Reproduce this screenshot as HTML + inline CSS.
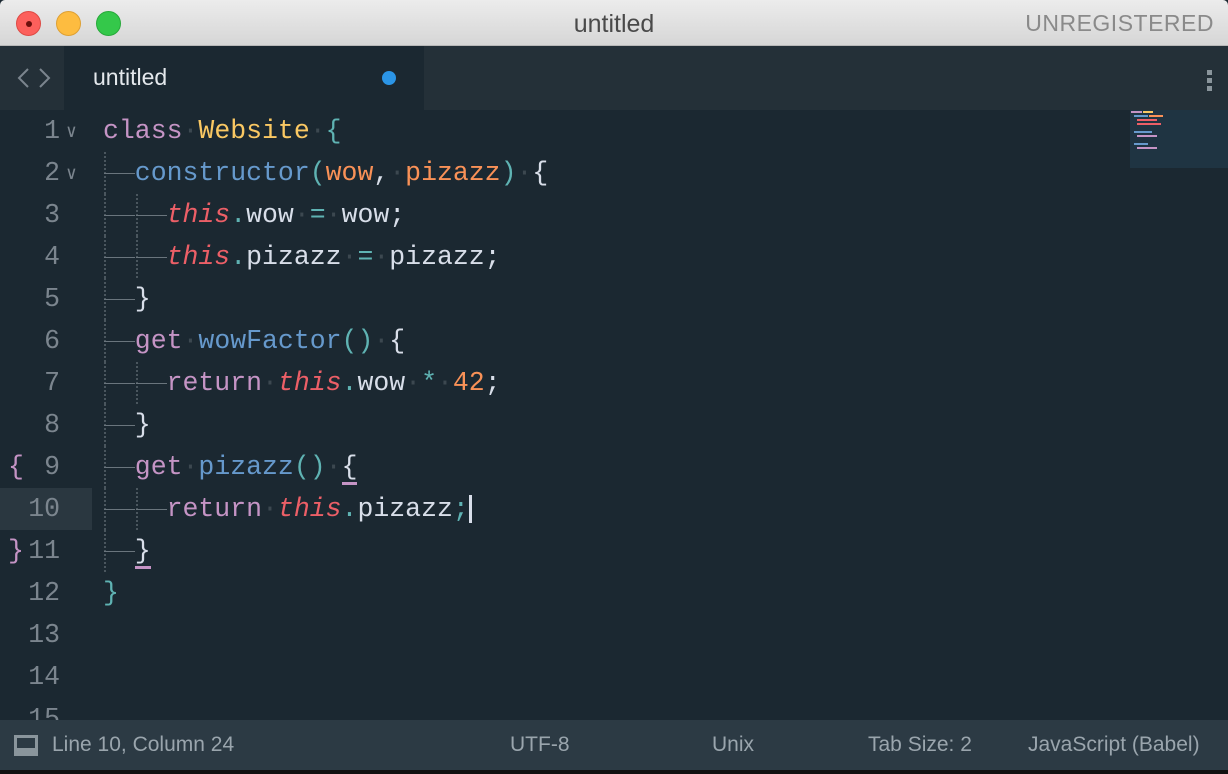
<!DOCTYPE html>
<html><head><meta charset="utf-8"><style>
*{margin:0;padding:0;box-sizing:border-box}
body{width:1228px;height:774px;overflow:hidden;background:#1b2831;font-family:"Liberation Sans",sans-serif;position:relative}
.title{position:absolute;left:0;top:0;width:1228px;height:46px;background:linear-gradient(#ececec,#d6d6d6);border-bottom:1px solid #b8b8b8;border-radius:5px 5px 0 0}
.dot{position:absolute;top:11px;width:25px;height:25px;border-radius:50%}
.title .t{position:absolute;left:0;width:1228px;text-align:center;top:10px;font-size:25px;color:#4a4a4a}
.title .u{position:absolute;right:14px;top:10px;font-size:23px;color:#8a8a8a;letter-spacing:.5px}
.tabbar{position:absolute;left:0;top:46px;width:1228px;height:64px;background:#243038}
.tab{position:absolute;left:64px;top:0;width:360px;height:64px;background:#1b2831}
.tab span{position:absolute;left:29px;top:18px;font-size:23px;color:#e4e8ec}
.tab i{position:absolute;left:318px;top:25px;width:14px;height:14px;border-radius:50%;background:#2b95e6}
.ed{position:absolute;left:0;top:110px;width:1228px;height:610px;background:#1b2831;overflow:hidden}
.ln{position:absolute;left:0;width:1228px;height:42px;line-height:42px;font-family:"Liberation Mono",monospace;font-size:26.5px;white-space:pre}
.num{position:absolute;left:0;width:60px;color:#7b858e;text-align:right}
.code{position:absolute;left:103px;color:#d8dee9}
.g{display:inline-block;width:31.8px;height:42px;vertical-align:top;position:relative}
.g:before{content:"";position:absolute;left:1px;top:0;height:42px;border-left:2px dotted #4a565e}
.g:after{content:"";position:absolute;left:1px;right:0;top:21px;height:1px;background:#6a757d}
.k{color:#c594c5}.c{color:#fac863}.b{color:#5fb3b3}.f{color:#6699cc}.p{color:#f99157}.th{color:#ec5f67;font-style:italic}.w{color:#d8dee9}
.sp{color:#3c4850}
.fold{position:absolute;left:66px;top:2px;color:#7b858e;font-size:18px}
.status{position:absolute;left:0;top:720px;width:1228px;height:50px;background:#2c3a44;color:#9aa5ad;font-size:21px}
.status span{position:absolute;top:13px}
.bottom{position:absolute;left:0;top:770px;width:1228px;height:4px;background:#111}
.mm{position:absolute;height:2px}
</style></head><body>
<div class="title">
<div class="dot" style="left:16px;background:#fc605c;border:1px solid #de4a44"><div style="position:absolute;left:9px;top:9px;width:6px;height:6px;border-radius:50%;background:#6b0f0c"></div></div>
<div class="dot" style="left:56px;background:#fdbc40;border:1px solid #dea033"></div>
<div class="dot" style="left:96px;background:#34c84a;border:1px solid #27a93a"></div>
<div class="t">untitled</div><div class="u">UNREGISTERED</div>
</div>
<div class="tabbar">
<svg style="position:absolute;left:8px;top:20px" width="50" height="24"><path d="M20 3 L11 12 L20 21" stroke="#7b858e" stroke-width="2" fill="none"/><path d="M42 3 L51 12 L42 21" stroke="#7b858e" stroke-width="2" fill="none" transform="translate(-10 0)"/></svg>
<div class="tab"><span>untitled</span><i></i></div>
<div style="position:absolute;left:1207px;top:24px;width:5px;height:5px;background:#8a959c;box-shadow:0 8px 0 #8a959c,0 16px 0 #8a959c"></div>
</div>
<div class="ed">
<div style="position:absolute;left:0;top:378px;width:92px;height:42px;background:#2a3740"></div>
<div style="position:absolute;left:1130px;top:0;width:98px;height:58px;background:#1f3442"></div>
<div class="mm" style="left:1131px;top:1px;width:11px;background:#c594c5"></div><div class="mm" style="left:1143px;top:1px;width:10px;background:#fac863"></div>
<div class="mm" style="left:1134px;top:5px;width:14px;background:#6699cc"></div><div class="mm" style="left:1149px;top:5px;width:14px;background:#f99157"></div>
<div class="mm" style="left:1137px;top:9px;width:20px;background:#ec5f67"></div>
<div class="mm" style="left:1137px;top:13px;width:24px;background:#ec5f67"></div>
<div class="mm" style="left:1134px;top:21px;width:18px;background:#6699cc"></div>
<div class="mm" style="left:1137px;top:25px;width:20px;background:#c594c5"></div>
<div class="mm" style="left:1134px;top:33px;width:14px;background:#6699cc"></div>
<div class="mm" style="left:1137px;top:37px;width:20px;background:#c594c5"></div>

<div class="ln" style="top:0"><span class="num">1</span><span class="fold">∨</span><span class="code"><span class="k">class</span><span class="sp">·</span><span class="c">Website</span><span class="sp">·</span><span class="b">{</span></span></div>
<div class="ln" style="top:42px"><span class="num">2</span><span class="fold">∨</span><span class="code"><span class="g"></span><span class="f">constructor</span><span class="b">(</span><span class="p">wow</span>,<span class="sp">·</span><span class="p">pizazz</span><span class="b">)</span><span class="sp">·</span>{</span></div>
<div class="ln" style="top:84px"><span class="num">3</span><span class="code"><span class="g"></span><span class="g"></span><span class="th">this</span><span class="b">.</span>wow<span class="sp">·</span><span class="b">=</span><span class="sp">·</span>wow;</span></div>
<div class="ln" style="top:126px"><span class="num">4</span><span class="code"><span class="g"></span><span class="g"></span><span class="th">this</span><span class="b">.</span>pizazz<span class="sp">·</span><span class="b">=</span><span class="sp">·</span>pizazz;</span></div>
<div class="ln" style="top:168px"><span class="num">5</span><span class="code"><span class="g"></span>}</span></div>
<div class="ln" style="top:210px"><span class="num">6</span><span class="code"><span class="g"></span><span class="k">get</span><span class="sp">·</span><span class="f">wowFactor</span><span class="b">()</span><span class="sp">·</span>{</span></div>
<div class="ln" style="top:252px"><span class="num">7</span><span class="code"><span class="g"></span><span class="g"></span><span class="k">return</span><span class="sp">·</span><span class="th">this</span><span class="b">.</span>wow<span class="sp">·</span><span class="b">*</span><span class="sp">·</span><span class="p">42</span>;</span></div>
<div class="ln" style="top:294px"><span class="num">8</span><span class="code"><span class="g"></span>}</span></div>
<div class="ln" style="top:336px"><span style="position:absolute;left:8px;color:#c594c5">{</span><span class="num">9</span><span class="code"><span class="g"></span><span class="k">get</span><span class="sp">·</span><span class="f">pizazz</span><span class="b">()</span><span class="sp">·</span><span style="border-bottom:3px solid #c594c5">{</span></span></div>
<div class="ln" style="top:378px"><span class="num">10</span><span class="code"><span class="g"></span><span class="g"></span><span class="k">return</span><span class="sp">·</span><span class="th">this</span><span class="b">.</span>pizazz<span class="b">;</span><span style="display:inline-block;width:3px;height:28px;background:#d8dee9;vertical-align:middle"></span></span></div>
<div class="ln" style="top:420px"><span style="position:absolute;left:8px;color:#c594c5">}</span><span class="num">11</span><span class="code"><span class="g"></span><span style="border-bottom:3px solid #c594c5">}</span></span></div>
<div class="ln" style="top:462px"><span class="num">12</span><span class="code"><span class="b">}</span></span></div>
<div class="ln" style="top:504px"><span class="num">13</span></div>
<div class="ln" style="top:546px"><span class="num">14</span></div>
<div class="ln" style="top:588px"><span class="num">15</span></div>
</div>
<div class="status">
<div style="position:absolute;left:14px;top:15px;width:24px;height:21px;background:#8a959c"><div style="position:absolute;left:3px;top:3px;width:18px;height:10px;background:#2c3a44"></div></div>
<span style="left:52px">Line 10, Column 24</span>
<span style="left:510px">UTF-8</span>
<span style="left:712px">Unix</span>
<span style="left:868px">Tab Size: 2</span>
<span style="left:1028px">JavaScript (Babel)</span>
</div>
<div class="bottom"></div>
</body></html>
